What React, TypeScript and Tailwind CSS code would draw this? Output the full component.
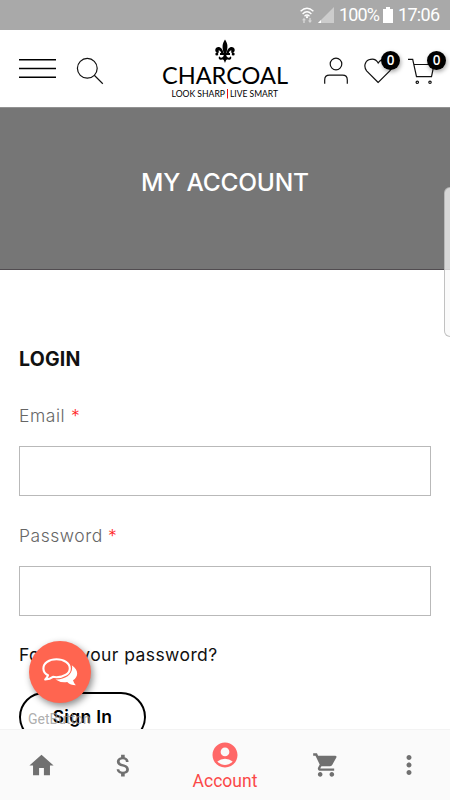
import React from "react";
import { MdHome, MdAttachMoney, MdAccountCircle, MdShoppingCart, MdMoreVert } from "react-icons/md";

function StatusBar() {
  return (
    <div className="flex h-[30px] shrink-0 items-center justify-end bg-[#a9a9a9] pr-[10px] text-white">
      <svg width="14" height="17" viewBox="0 0 14 17" fill="none" stroke="#fff" strokeWidth="1.4" className="mr-[4px]">
        <path d="M.6 4.2Q7-1.8 13.4 4.2M2.6 6.9Q7 2.8 11.4 6.9M4.5 9.2Q7 7 9.5 9.2" />
        <circle cx="7" cy="10.2" r="1.1" fill="#fff" stroke="none" />
        <path d="M2 13.200L4 10.800 6 13.200H4.700V16H3.300V13.200ZM8 13.400H9.300V11H10.700V13.400H12L10 16Z" fill="#d8d8d8" stroke="none" />
      </svg>
      <svg width="16" height="16" viewBox="0 0 16 16" className="mr-[5px]">
        <path d="M0 16L16 0V16Z" fill="#ccc" />
        <path d="M0 16L3 13V16Z" fill="#fff" />
      </svg>
      <span className="w-[39px] whitespace-nowrap font-['Roboto',sans-serif] text-[18px] leading-[32px] tracking-[-0.9px]">100%</span>
      <svg width="10" height="16" viewBox="0 0 10 16" className="ml-[5px] mr-[5px]">
        <path d="M3 0H7V2H10V16H0V2H3Z" fill="#fff" />
      </svg>
      <span className="w-[42px] whitespace-nowrap font-['Roboto',sans-serif] text-[18px] leading-[32px] tracking-[-0.7px]">17:06</span>
    </div>
  );
}

function Logo() {
  return (
    <svg width="128" height="62" viewBox="0 0 128 62" className="font-['Lato',sans-serif]">
      <g fill="#000">
        <path d="M63 .5C60 5 60 8 61.800 14.500H64.200C66 8 66 5 63 .5Z" />
        <path d="M61.500 14.500C61 9.500 57 6.500 54.300 8.800C52 11 54 15 56.800 13.600C57.500 13 56.800 12 56 12C57.500 10.500 59 12 59.300 15Z" />
        <path d="M64.500 14.500C65 9.500 69 6.500 71.700 8.800C74 11 72 15 69.200 13.600C68.500 13 69.200 12 70 12C68.500 10.500 67 12 66.700 15Z" />
        <path d="M58 14H68V16H58Z" />
        <path d="M61.800 16C61.300 19 58 19.500 57.500 17.200C55.500 19 57.500 21.500 60 20.500C61.500 20 62 21 63 24C64 21 64.500 20 66 20.500C68.500 21.500 70.500 19 68.500 17.200C68 19.500 64.700 19 64.200 16Z" />
        <circle cx="54.800" cy="15" r="1.500" />
        <circle cx="71.200" cy="15" r="1.500" />
      </g>
      <text x="0" y="45" fontSize="22.500" textLength="126" lengthAdjust="spacingAndGlyphs" fill="#000">CHARCOAL</text>
      <text x="9.500" y="58" fontSize="9.500" textLength="53.500" lengthAdjust="spacingAndGlyphs" fill="#000">LOOK SHARP</text>
      <path d="M65.500 50V59.500" stroke="#e11" strokeWidth="1" />
      <text x="68" y="58" fontSize="9.500" textLength="48" lengthAdjust="spacingAndGlyphs" fill="#000">LIVE SMART</text>
    </svg>
  );
}

function Badge({ className }: { className: string }) {
  return (
    <span className={"absolute flex h-[19px] w-[19px] items-center justify-center rounded-full bg-black font-['Open_Sans',sans-serif] text-[13.5px] font-semibold leading-none text-white shadow-[1px_2px_4px_rgba(0,0,0,0.35)] " + className}>
      0
    </span>
  );
}

function Header() {
  return (
    <header className="flex h-[77px] shrink-0 bg-white pl-[19px]">
      <svg width="38" height="22" viewBox="0 0 38 22" className="mt-[28px]" stroke="#000" strokeWidth="1.400">
        <path d="M0 1.700H37M0 10.500H37M0 19.200H37" />
      </svg>
      <svg width="28" height="28" viewBox="0 0 28 28" className="ml-[19px] mt-[27px]" fill="none" stroke="#111" strokeWidth="1.200">
        <circle cx="11.300" cy="11.300" r="9.900" />
        <path d="M18.300 18.300L26.800 26.700" />
      </svg>
      <div className="ml-[58px] mt-[9px] w-[128px]"><Logo /></div>
      <svg width="26" height="28" viewBox="0 0 26 28" className="ml-[33px] mt-[27px]" fill="none" stroke="#111" strokeWidth="1.200">
        <circle cx="13" cy="7" r="5.800" />
        <path d="M1.700 26.700V23Q1.700 18.200 6.500 18.200H19.500Q24.300 18.200 24.300 23V26.700" />
      </svg>
      <div className="relative ml-[15px] mt-[21px] h-[36px] w-[36px]">
        <svg width="30" height="26" viewBox="0 0 30 26" className="mt-[7px]" fill="none" stroke="#111" strokeWidth="1.200">
          <path d="M14.200 24.500L2.600 12.800C-.5 9 .8 3.300 4.800 1.700C9 .2 12.500 1.700 14.200 5C16.500 1.700 20 .2 24.200 1.700C28.500 3.500 29 9.500 25.800 12.800Z" />
        </svg>
        <Badge className="left-[17px] top-0" />
      </div>
      <div className="relative ml-[8px] mt-[21px] h-[36px] w-[40px]">
        <svg width="30" height="28" viewBox="0 0 30 28" className="mt-[7px]" fill="none" stroke="#111" strokeWidth="1.200">
          <path d="M0 1.300H4.700L8.500 18.700H23.500L26 6.500H6" />
          <circle cx="9.300" cy="24.300" r="1.200" />
          <circle cx="22" cy="24.300" r="1.200" />
        </svg>
        <Badge className="left-[19px] top-0" />
      </div>
    </header>
  );
}

function Field({ label, width }: { label: string; width: string }) {
  return (
    <label className="block h-[120px] text-[17.500px] font-light leading-[24px] text-[#666]">
      <span className="flex h-[42px] items-start">
        <span className={"whitespace-nowrap tracking-[0.55px] " + width}>{label}</span>
        <span className="text-[#f22]">*</span>
      </span>
      <input className="block h-[50px] w-[412px] border border-[#b9b9b9] bg-white outline-none" />
    </label>
  );
}

function ChatButton() {
  return (
    <div className="absolute left-[29px] top-[641px] flex h-[62px] w-[62px] items-center justify-center rounded-full bg-[#ff6550] shadow-[2px_3px_7px_rgba(0,0,0,0.45)]">
      <svg width="36" height="28" viewBox="0 0 36 28">
        <path d="M14.500 1.200C7 1.200 1.400 5.300 1.400 10.400C1.400 13.300 3.200 15.800 6 17.300Q5.500 19.300 3.200 21.500Q8 21.100 11 18.800Q12.500 19.200 14.500 19.200C22 19.200 27.800 15.400 27.800 10.400C27.800 5.300 22 1.200 14.500 1.200Z" fill="none" stroke="#fff" strokeWidth="2.100" strokeLinejoin="round" />
        <path d="M29.800 7.200C37 11.800 36.500 18.800 31 22.300Q31.500 24.400 33.800 27.200Q28.500 27.200 25.200 24Q18.500 25 13.500 21.500C23.500 22 32 15.500 29.800 7.200Z" fill="#fff" />
      </svg>
    </div>
  );
}

function BottomNav() {
  return (
    <nav className="flex h-[71px] shrink-0 border-t border-[#f3f3f3] bg-[#fafafa] text-[#707070]">
      <div className="flex w-[82px] items-center justify-center"><MdHome size={29} /></div>
      <div className="flex w-[82px] items-center justify-center"><MdAttachMoney size={29} /></div>
      <div className="flex w-[122px] flex-col items-center pt-[10px] text-[#ff6767]">
        <MdAccountCircle size={30} />
        <span className="whitespace-nowrap font-['Roboto',sans-serif] text-[17.500px] leading-[23px] text-[#fa4848]">Account</span>
      </div>
      <div className="flex w-[80px] items-center justify-center"><MdShoppingCart size={28} /></div>
      <div className="flex w-[84px] items-center justify-center pl-[1px]"><MdMoreVert size={30} /></div>
    </nav>
  );
}

export default function App() {
  return (
    <div className="relative flex h-[800px] w-[450px] flex-col overflow-hidden bg-white font-['Inter',sans-serif]">
      <StatusBar />
      <Header />
      <section className="flex h-[163px] shrink-0 items-center justify-center border-y border-t-[#929292] border-b-[#514c50] bg-[#767676] pb-[13px]">
        <h1 className="whitespace-nowrap text-[24.500px] font-medium leading-[30px] tracking-[-0.2px] text-white">MY ACCOUNT</h1>
      </section>
      <main className="h-[459px] shrink-0 overflow-hidden pl-[19px] pt-[77px]">
        <h2 className="h-[57px] text-[19.500px] font-bold leading-[24px] tracking-[0.2px] text-[#111]">LOGIN</h2>
        <Field label="Email" width="w-[52px]" />
        <Field label="Password" width="w-[89px]" />
        <a className="block h-[48px] whitespace-nowrap text-[17.500px] leading-[22px] tracking-[0.42px] text-[#111]">Forgot your password?</a>
        <button className="block h-[50px] w-[127px] rounded-full border-2 border-black text-[17.500px] font-semibold tracking-[0.3px] text-black">Sign In</button>
      </main>
      <BottomNav />
      <span className="absolute left-[28px] top-[710px] font-['Roboto',sans-serif] text-[14px] leading-[18px] text-[#999]/80">GetButton</span>
      <ChatButton />
      <div className="absolute left-[444px] top-[187px] h-[150px] w-[12px] rounded-[6px] border border-[#aaa]/70 bg-[#f8f8f8]/75" />
    </div>
  );
}
